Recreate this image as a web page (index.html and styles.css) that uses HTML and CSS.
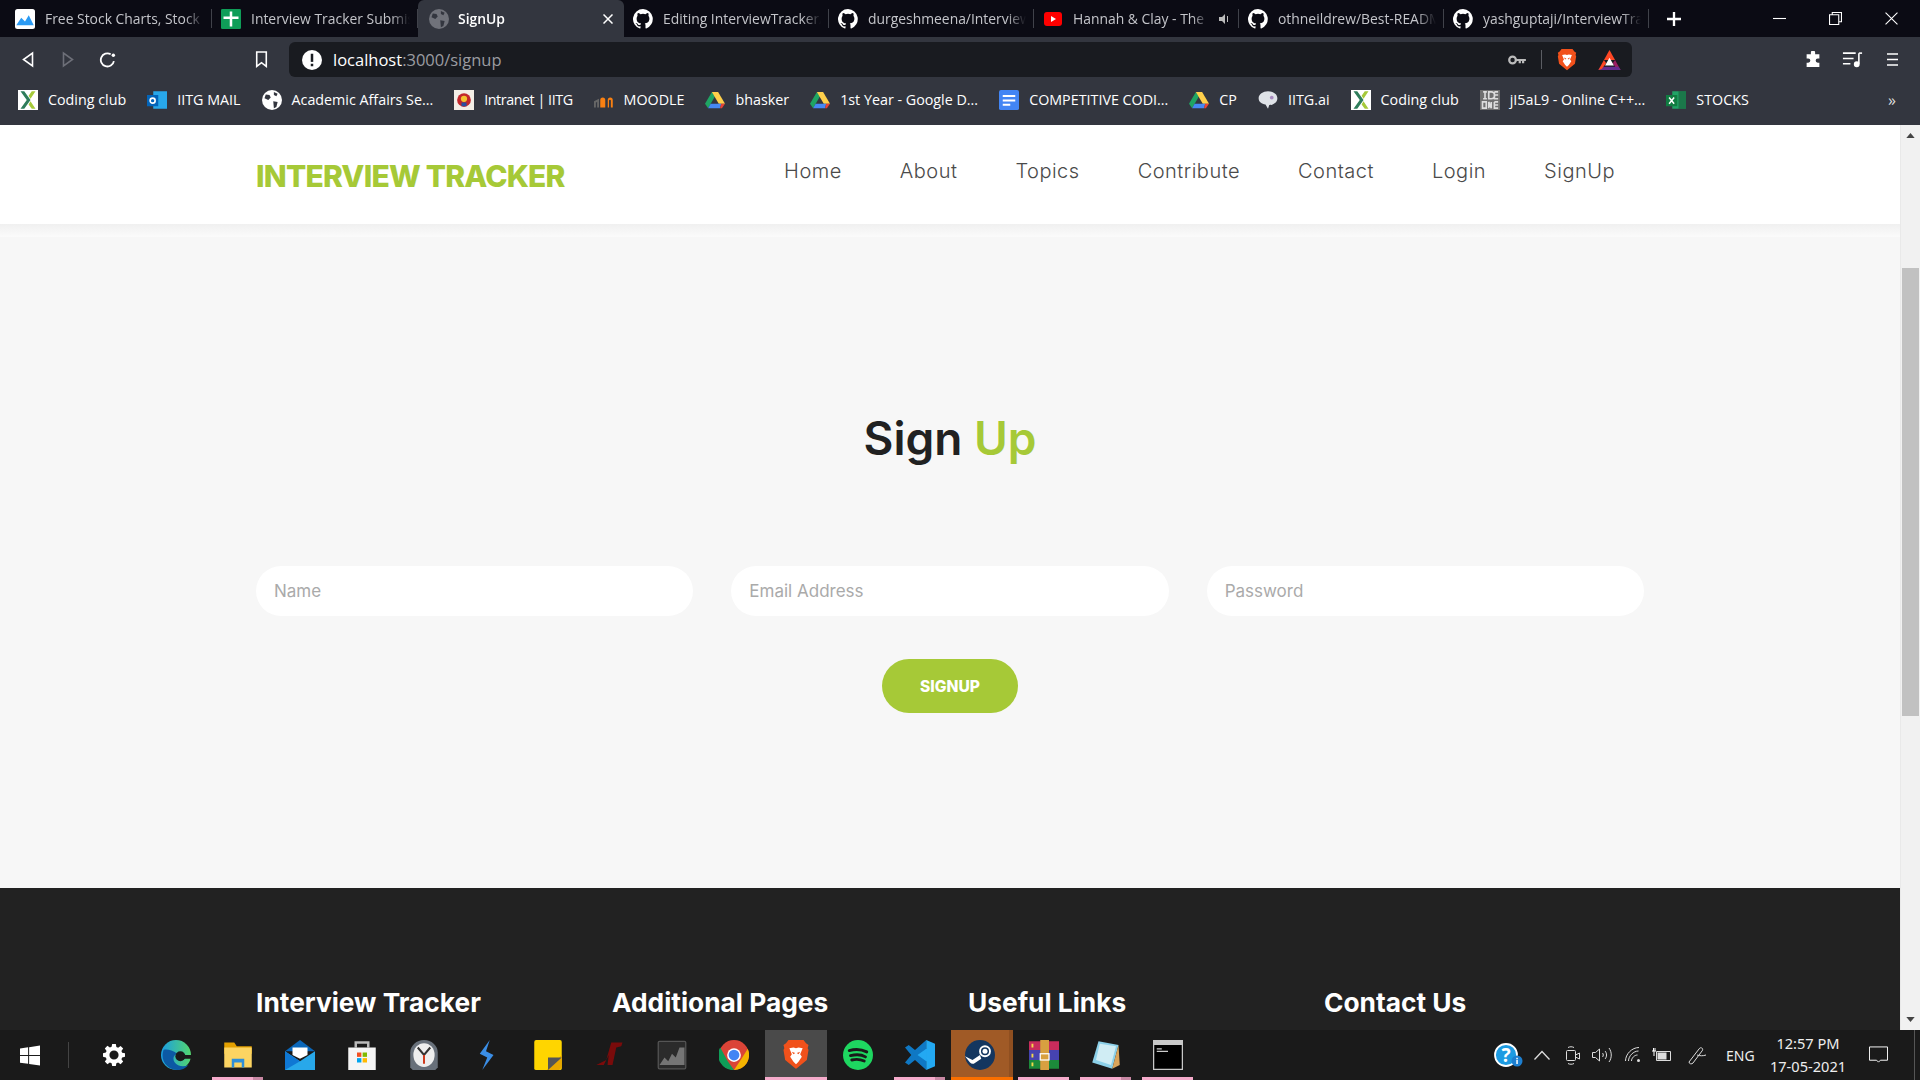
FILE: index.html
```html
<!DOCTYPE html>
<html lang="en">
<head>
<meta charset="utf-8">
<title>SignUp</title>
<link rel="stylesheet" href="styles.css">
</head>
<body>
<svg width="0" height="0" class="defs">
  <defs>
    <symbol id="gh" viewBox="0 0 16 16"><path fill="#fff" d="M8 0a8 8 0 0 0-2.500 15.600c.4.1.5-.2.5-.4v-1.400c-2.200.5-2.700-1-2.700-1-.4-.9-.9-1.200-.9-1.200-.7-.5.100-.5.100-.5.800.1 1.200.8 1.200.8.700 1.200 1.900.9 2.300.7.100-.5.300-.9.500-1.100-1.800-.2-3.600-.9-3.600-4 0-.9.300-1.600.8-2.100-.1-.2-.4-1 .1-2.100 0 0 .7-.2 2.200.8a7.600 7.600 0 0 1 4 0c1.500-1 2.200-.8 2.200-.8.500 1.100.2 1.900.1 2.100.5.600.8 1.300.8 2.100 0 3.100-1.900 3.700-3.700 3.900.3.300.6.800.6 1.500v2.200c0 .2.100.5.600.4A8 8 0 0 0 8 0z"/></symbol>
    <symbol id="globe" viewBox="0 0 16 16"><circle cx="8" cy="8" r="8" fill="currentColor"/><path fill="#33363f" d="M3 3.500l3 .5 1 2-2 2-3-1.500zM9 9l3.500.5-1 4-2 1zM9.500 1.500l3 1.500-1 2-2-1z"/></symbol>
    <symbol id="drive" viewBox="0 0 16 16"><path fill="#1fa463" d="M5.500 1.500L0 11l2.500 3.500L8 5z"/><path fill="#ffd04b" d="M5.500 1.500h5l5.500 9.500h-5z"/><path fill="#4688f4" d="M2.500 14.500h9.500L13 11H4.500z"/><path fill="#e94235" d="M12 14.500h1.500L16 11h-3z"/></symbol>
    <symbol id="cclub" viewBox="0 0 16 16"><rect width="16" height="16" fill="#fff"/><path fill="#2e7d5b" d="M2 1h3l5 7-5 7H2l5-7z"/><path fill="#a5c93a" d="M14 1h-3L8.500 4.500 10 7zM14 15h-3L8.500 11.500 10 9z"/></symbol>
    <symbol id="brave" viewBox="0 0 16 18"><path fill="#f1511b" d="M3.500 0h9l1.500 2 1.500 1-.5 2 .5 1-1 6-6 5-.5.300-.5-.300-6-5-1-6 .5-1-.500-2L2 2z"/><path fill="#fff" d="M4 5l2.500-.5L8 5l1.500-.5L12 5l-1.500 3.500 1 1.500L9.500 13 8 14.500 6.500 13l-2-3 1-1.500z"/><path fill="#f1511b" d="M5.500 7l2 .8-1 .7zM10.500 7l-2 .8 1 .7z"/></symbol>
  </defs>
</svg>

<div class="browser">
  <div class="tabstrip">
    <div class="tab tab-first"><svg class="fav" viewBox="0 0 16 16"><rect width="16" height="16" rx="2" fill="#fff"/><path fill="#2b9bf4" d="M1 13l4-6 3 3 3-5 4 8z"/></svg><span class="tab-title">Free Stock Charts, Stock</span></div>
    <div class="tab tab-second"><svg class="fav" viewBox="0 0 16 16"><rect width="16" height="16" rx="1" fill="#0f9d58"/><path fill="#fff" d="M7 2h2v4h5v2H9v6H7V8H2V6h5z"/></svg><span class="tab-title">Interview Tracker Submis</span></div>
    <div class="tab active"><svg class="fav muted"><use href="#globe"/></svg><span class="tab-title">SignUp</span><svg class="tab-x" viewBox="0 0 10 10" stroke="#fff" stroke-width="1.500"><path d="M.5.500l9 9M9.500.5l-9 9"/></svg></div>
    <div class="tab"><svg class="fav"><use href="#gh"/></svg><span class="tab-title">Editing InterviewTracker/</span></div>
    <div class="tab"><svg class="fav"><use href="#gh"/></svg><span class="tab-title">durgeshmeena/Interview</span></div>
    <div class="tab"><svg class="fav" viewBox="0 0 20 20"><rect x="1" y="3" width="18" height="14" rx="3" fill="#f00"/><path fill="#fff" d="M8 7l5 3-5 3z"/></svg><span class="tab-title">Hannah &amp; Clay - The</span><svg class="tab-sound" viewBox="0 0 12 12"><path fill="#bbb" d="M0 4h3l3-3v10L3 8H0zM8 3v6h1V3z"/></svg></div>
    <div class="tab"><svg class="fav"><use href="#gh"/></svg><span class="tab-title">othneildrew/Best-READM</span></div>
    <div class="tab"><svg class="fav"><use href="#gh"/></svg><span class="tab-title">yashguptaji/InterviewTra</span></div>
    <svg class="newtab" viewBox="0 0 12 12"><path fill="#fff" d="M5 0h2v5h5v2H7v5H5V7H0V5h5z"/></svg>
    <div class="winctl">
      <svg class="winbtn" viewBox="0 0 12 12"><path stroke="#fff" d="M0 6h12"/></svg>
      <svg class="winbtn" viewBox="0 0 12 12" fill="none" stroke="#fff"><path d="M.5 2.500h8.500v9H.5zM3 2.500V.5h8.500v8.500H9"/></svg>
      <svg class="winbtn" viewBox="0 0 12 12"><path stroke="#fff" d="M.5.500l11 11M11.500.5l-11 11"/></svg>
    </div>
  </div>

  <div class="toolbar">
    <svg class="tb-ico back" viewBox="0 0 12 16" fill="none" stroke="#fff" stroke-width="1.600"><path d="M10.500 1.500v13L1.500 8z"/></svg>
    <svg class="tb-ico fwd" viewBox="0 0 12 16" fill="none" stroke="#6d6f78" stroke-width="1.600"><path d="M1.500 1.500v13l9-6.500z"/></svg>
    <svg class="tb-ico reload" viewBox="0 0 16 16" fill="none" stroke="#fff" stroke-width="1.700"><path d="M14 9.500A6.200 6.200 0 1 1 11 3"/><circle cx="13.500" cy="4" r="1.600" fill="#fff" stroke="none"/></svg>
    <svg class="tb-ico bookmark" viewBox="0 0 12 16" fill="none" stroke="#fff" stroke-width="1.500"><path d="M1.500 1h9v13.500L6 11l-4.500 3.500z"/></svg>
    <div class="omnibox">
      <svg class="info" viewBox="0 0 16 16"><circle cx="8" cy="8" r="8" fill="#fff"/><rect x="7" y="3" width="2" height="6.500" fill="#1a1c22"/><rect x="7" y="11" width="2" height="2" fill="#1a1c22"/></svg>
      <span class="url"><span class="url-host">localhost</span>:3000/signup</span>
      <svg class="key" viewBox="0 0 16 9"><circle cx="4" cy="4.500" r="3" fill="none" stroke="#bbb" stroke-width="2"/><path fill="#bbb" d="M6.500 3.500H16v2h-1.500v2h-2v-2h-1v2h-2v-2H6.500z"/></svg>
      <span class="omni-sep"></span>
      <svg class="brave"><use href="#brave"/></svg>
      <svg class="bat" viewBox="0 0 20 18"><path fill="#ff4724" d="M10 0l5 9H5z"/><path fill="#9e1f63" d="M15 9l5 9-3 0-4-6z"/><path fill="#662d91" d="M0 18h20l-2-3H2z"/><path fill="#ff4724" d="M5 9l-5 9 3-1 4-5z"/><path fill="#fff" d="M10 7l4 7H6z"/></svg>
    </div>
    <svg class="tb-ico puzzle" viewBox="0 0 16 16"><path fill="#fff" d="M6 1.500a2 2 0 0 1 4 0V3h4v4h-1.500a2 2 0 0 0 0 4H14v4H2v-4h1.500a2 2 0 0 0 0-4H2V3h4z"/></svg>
    <svg class="tb-ico playlist" viewBox="0 0 18 16" fill="none" stroke="#fff" stroke-width="1.500"><path d="M0 2h12M0 7h10M0 12h7"/><path d="M15 2v10"/><circle cx="13" cy="12.500" r="2" fill="#fff"/><path d="M15 2h3"/></svg>
    <svg class="tb-ico menu" viewBox="0 0 12 16" stroke="#fff" stroke-width="1.500"><path d="M0 2h12M0 8h12M0 14h12"/></svg>
  </div>

  <div class="bookmarks">
    <a class="bm"><svg class="fav"><use href="#cclub"/></svg>Coding club</a>
    <a class="bm"><svg class="fav" viewBox="0 0 16 16"><rect x="5" y="1" width="11" height="14" fill="#28a8ea"/><rect x="0" y="4" width="9" height="9" fill="#0364b8"/><circle cx="4.500" cy="8.500" r="2" fill="none" stroke="#fff" stroke-width="1.300"/></svg>IITG MAIL</a>
    <a class="bm"><svg class="fav"><use href="#globe"/></svg>Academic Affairs Se...</a>
    <a class="bm bm-tight"><svg class="fav" viewBox="0 0 16 16"><rect width="16" height="16" fill="#f3eee6"/><circle cx="8" cy="8" r="5.500" fill="#c3272b"/><circle cx="8" cy="7" r="2.500" fill="#f3c22f"/><rect x="6" y="10" width="4" height="3" fill="#2a4fa0"/></svg>Intranet | IITG</a>
    <a class="bm"><svg class="fav" viewBox="0 0 16 16"><path fill="#f98012" d="M5 14V8a2 2 0 0 1 4 0v6h2V8a2 2 0 0 1 4 0v6h-1.500V8.500a.7.7 0 0 0-1.500 0V14z"/><path fill="#666" d="M0 14V9l4-2v7H2.500V9.500L1.500 10v4z"/></svg>MOODLE</a>
    <a class="bm"><svg class="fav"><use href="#drive"/></svg>bhasker</a>
    <a class="bm"><svg class="fav"><use href="#drive"/></svg>1st Year - Google D...</a>
    <a class="bm"><svg class="fav" viewBox="0 0 16 16"><rect width="16" height="16" rx="1.500" fill="#4285f4"/><path fill="#fff" d="M3 4h10v1.600H3zM3 7.500h10v1.600H3zM3 11h6v1.600H3z"/></svg>COMPETITIVE CODI...</a>
    <a class="bm"><svg class="fav"><use href="#drive"/></svg>CP</a>
    <a class="bm"><svg class="fav" viewBox="0 0 16 16"><path fill="#dfe3e8" d="M8 1c4 0 7.500 2 7.500 5.500S12 12 9 12l-1 3-2-3.500C3 11 .5 9.500.5 6.500S4 1 8 1z"/><circle cx="11" cy="6" r="1.500" fill="#a88cc0"/></svg>IITG.ai</a>
    <a class="bm"><svg class="fav"><use href="#cclub"/></svg>Coding club</a>
    <a class="bm"><svg class="fav" viewBox="0 0 16 16"><rect width="16" height="16" fill="#6f6f6f"/><path stroke="#ddd" stroke-width="1.300" fill="none" d="M2.500 1.500h3M4 1.500V7M2.500 7h3M7 1.500h2a2 2 0 0 1 0 5.500H7zM11.500 1.500h3M11.500 1.500V7h3M11.500 4h3M2 9.500h3v5H2zM7 14.500v-5l2 5v-5M11.500 9.500h3M11.500 9.500v5h3M11.500 12h3"/></svg>jI5aL9 - Online C++...</a>
    <a class="bm"><svg class="fav" viewBox="0 0 16 16"><rect x="5" y="1" width="11" height="14" fill="#21a366"/><rect x="10" y="1" width="6" height="14" fill="#185c37" opacity=".6"/><rect y="4" width="9" height="9" fill="#107c41"/><path stroke="#fff" stroke-width="1.200" d="M2.500 6l4 5M6.500 6l-4 5"/></svg>STOCKS</a>
    <span class="bm-more">»</span>
  </div>
</div>

<div class="viewport">
  <div class="page">
    <header class="site-header">
      <div class="logo">INTERVIEW TRACKER</div>
      <nav class="nav">
        <a>Home</a><a>About</a><a>Topics</a><a>Contribute</a><a>Contact</a><a>Login</a><a>SignUp</a>
      </nav>
    </header>
    <div class="header-shade"></div>
    <main class="signup">
      <h1 class="title">Sign <span class="accent">Up</span></h1>
      <form class="form">
        <div class="fields">
          <input class="field" placeholder="Name">
          <input class="field" placeholder="Email Address">
          <input class="field" placeholder="Password">
        </div>
        <button class="submit" type="button">SIGNUP</button>
      </form>
    </main>
    <footer class="site-footer">
      <h3>Interview Tracker</h3>
      <h3>Additional Pages</h3>
      <h3>Useful Links</h3>
      <h3>Contact Us</h3>
    </footer>
  </div>
  <div class="scrollbar">
    <svg class="sb-arrow" viewBox="0 0 10 6"><path fill="#444" d="M5 0l5 6H0z"/></svg>
    <div class="sb-track"><div class="sb-thumb"></div></div>
    <svg class="sb-arrow" viewBox="0 0 10 6"><path fill="#444" d="M5 6L0 0h10z"/></svg>
  </div>
</div>

<div class="taskbar">
  <div class="task-item start"><svg class="ti win" viewBox="0 0 16 16"><path fill="#fff" d="M0 2.300l6.500-.9v6.200H0zM7.300 1.300L16 0v7.600H7.300zM0 8.400h6.500v6.200L0 13.700zM7.300 8.400H16V16l-8.700-1.300z"/></svg></div>
  <span class="task-sep"></span>
  <div class="task-item"><svg class="ti gear" viewBox="0 0 24 24"><path fill="#fff" fill-rule="evenodd" d="M10 0h4l.6 3.200 1.900.8 2.700-1.900 2.800 2.800-1.900 2.700.8 1.900L24 10v4l-3.100.600-.8 1.900 1.900 2.700-2.800 2.800-2.700-1.900-1.900.8L14 24h-4l-.6-3.100-1.900-.8-2.700 1.900-2.800-2.800 1.900-2.700-.8-1.900L0 14v-4l3.100-.6.8-1.900L2 4.800 4.800 2l2.700 1.900 1.900-.8zM12 7a5 5 0 1 0 0 10 5 5 0 0 0 0-10z"/></svg></div>
  <div class="task-item"><svg class="ti" viewBox="0 0 24 24"><defs><linearGradient id="e1" x1="0" y1="0" x2="1" y2="0"><stop offset="0" stop-color="#1b9de2"/><stop offset="1" stop-color="#53d66e"/></linearGradient></defs><circle cx="12" cy="12" r="12" fill="url(#e1)"/><path fill="#0c59a4" d="M2 8c-3 8 3 16 11 16 4 0 7-1.500 9-4-4 2-9 1-11-2-2-3-1-6 2-7-4-3-9-4-11-3z"/><circle cx="15.500" cy="13" r="4" fill="#1a1a1a"/><path fill="#1a1a1a" d="M13 12h11v3H16z"/></svg></div>
  <div class="task-item run stacked"><svg class="ti" viewBox="0 0 24 24"><path fill="#e3a000" d="M1 2h8l2 3h12v6H1z"/><path fill="#fcd462" d="M1 6h22v16H1z"/><path fill="#2f8fd8" d="M7 15h10v7h-2v-4H9v4H7z"/></svg></div>
  <div class="task-item"><svg class="ti" viewBox="0 0 24 24"><path fill="#0a66b8" d="M12 0l12 9H0z"/><path fill="#fff" d="M6 6h12v6l-6 3-6-3z"/><path fill="#28a8ea" d="M0 9l12 8 12-8v15H0z"/><path fill="#0f78d4" d="M0 9l12 8-12 7z"/></svg></div>
  <div class="task-item"><svg class="ti" viewBox="0 0 24 24"><path fill="none" stroke="#bbb" stroke-width="2" d="M7 6V2h10v4"/><path fill="#f5f5f5" d="M1 6h22v18H1z"/><path fill="#f25022" d="M8 10h3.500v3.500H8z"/><path fill="#7fba00" d="M12.500 10H16v3.500h-3.500z"/><path fill="#00a4ef" d="M8 14.500h3.500V18H8z"/><path fill="#ffb900" d="M12.500 14.500H16V18h-3.500z"/></svg></div>
  <div class="task-item"><svg class="ti" viewBox="0 0 24 24"><path fill="#68707a" d="M1 22V10a11 10 0 0 1 22 0v12l-2 2H3z"/><ellipse cx="12" cy="12" rx="8.500" ry="9.500" fill="#eee"/><path stroke="#333" stroke-width="1.600" fill="none" d="M7 6l5 6 5-6"/><path stroke="#d13a1d" stroke-width="1.600" d="M12 12v7"/></svg></div>
  <div class="task-item"><svg class="ti" viewBox="0 0 24 24"><path fill="#3b8ee6" d="M15 0L7 11l6 3-4 10 9-12-6-3z"/></svg></div>
  <div class="task-item"><svg class="ti" viewBox="0 0 24 24"><rect width="22" height="24" x="1" rx="1.500" fill="#ffd500"/><path fill="#e8a800" d="M23 12v10l-2 2H11z"/><path fill="#555" d="M12 24V14h11z"/></svg></div>
  <div class="task-item"><svg class="ti" viewBox="0 0 24 24"><path fill="#7a0b0b" d="M1 20l8-4 4-14h9l-1 3-4 1-3 14H10l1-8-4 8z"/></svg></div>
  <div class="task-item"><svg class="ti" viewBox="0 0 24 24"><rect x="1" y="1" width="22" height="22" rx="1" fill="#2b2b2b" stroke="#555"/><path fill="#888" d="M2 20l4-6 3 3 3-6 3 3 3-8h4v14z" opacity=".8"/></svg></div>
  <div class="task-item"><svg class="ti" viewBox="0 0 24 24"><circle cx="12" cy="12" r="12" fill="#db4437"/><path fill="#0f9d58" d="M12 24A12 12 0 0 1 1 6l6 11 5 7z"/><path fill="#f4b400" d="M23 7a12 12 0 0 1-11 17l6-9z"/><circle cx="12" cy="12" r="5.500" fill="#fff"/><circle cx="12" cy="12" r="4.300" fill="#4285f4"/></svg></div>
  <div class="task-item active"><svg class="ti"><use href="#brave"/></svg></div>
  <div class="task-item"><svg class="ti" viewBox="0 0 24 24"><circle cx="12" cy="12" r="12" fill="#1ed760"/><path stroke="#1a1a1a" fill="none" stroke-linecap="round" stroke-width="2.300" d="M5 8.500c5-1.500 10-1 14 1M6 12.500c4-1 9-.8 12 1M7 16c3-.8 7-.6 10 .8"/></svg></div>
  <div class="task-item run stacked"><svg class="ti" viewBox="0 0 24 24"><path fill="#0f78c4" d="M17 0v24l-9-8-5 4-3-2 5-6-5-6 3-2 5 4z"/><path fill="#23a9f2" d="M17 0l7 3v18l-7 3zM17 7l-7 5 7 5z"/></svg></div>
  <div class="task-item steam"><svg class="ti" viewBox="0 0 24 24"><circle cx="12" cy="12" r="12" fill="#14365f"/><circle cx="16" cy="9" r="4" fill="none" stroke="#fff" stroke-width="1.500"/><circle cx="16" cy="9" r="2" fill="#fff"/><path fill="#fff" d="M0 13l6 3 6-4 1 3-6 4a3 3 0 0 1-3-1z"/></svg></div>
  <div class="task-item run"><svg class="ti" viewBox="0 0 24 24"><rect y="1" width="24" height="7" fill="#c72c5c"/><rect y="8" width="24" height="8" fill="#4643b0"/><rect y="16" width="24" height="7" fill="#1c8a3a"/><rect x="9" width="7" height="24" fill="#d8a040"/><rect x="9" y="11" width="7" height="5" fill="none" stroke="#fff"/><path fill="#f3d84a" d="M2 3h1.500v3H2zM2 11h1.500v3H2zM2 18h1.500v3H2z"/></svg></div>
  <div class="task-item run stacked"><svg class="ti" viewBox="0 0 24 24"><path fill="#8cd0e8" d="M6 1l16 3-5 19L1 18z"/><path fill="#d0edf4" d="M7 3l13 2-4 15L4 16z"/><path fill="#d9a45a" d="M22 4l1 16-6 3z"/></svg></div>
  <div class="task-item run"><svg class="ti" viewBox="0 0 24 24"><rect width="24" height="24" fill="#c8c8c8"/><rect x="1" y="4" width="22" height="19" fill="#000"/><path stroke="#ccc" d="M3 7h4M3 9h9"/></svg></div>

  <div class="tray">
    <div class="help"><svg class="help-ico" viewBox="0 0 29 24"><circle cx="12" cy="12" r="11" fill="#1d9be2" stroke="#fff" stroke-width="1.800"/><circle cx="23" cy="18" r="5.500" fill="#1d7fd0"/><rect x="22.300" y="17" width="1.500" height="4" fill="#fff"/><rect x="22.300" y="14.800" width="1.500" height="1.500" fill="#fff"/></svg><span class="help-q">?</span></div>
    <svg class="tr tr-up" viewBox="0 0 16 10" fill="none" stroke="#ddd" stroke-width="1.300"><path d="M.5 9.500l7.500-8 7.500 8"/></svg>
    <svg class="tr tr-cam" viewBox="0 0 14 19" fill="none" stroke="#ddd"><rect x=".5" y="4.500" width="9" height="10" rx="1"/><path d="M9.500 9l4-2v6l-4-2M2 1.500c2-1 4-1 6 0M2 17.500c2 1 4 1 6 0"/></svg>
    <svg class="tr tr-vol" viewBox="0 0 20 16" fill="none" stroke="#ddd"><path d="M.5 5.500h3L7.500 2v12l-4-3.500h-3zM10.500 6c1 1 1 3 0 4M13 4c2 2 2 6 0 8M17 1c3 4 3 10 0 14" /></svg>
    <svg class="tr tr-wifi" viewBox="0 0 16 16" fill="none" stroke="#ddd"><path d="M.5 14C.5 7 7 .5 14 .5M3.500 14c0-5 5-10 10-10M6.500 14c0-3 3-6 6-6"/><circle cx="13.500" cy="13.500" r="1.500" fill="#ddd" stroke="none"/></svg>
    <svg class="tr tr-batt" viewBox="0 0 20 14"><path fill="none" stroke="#ddd" d="M4.500 3.500h14v9h-14z"/><rect x="5.500" y="4.500" width="9" height="7" fill="#ddd"/><path stroke="#fff" d="M0 3h4M1.500 0v3M3 0v3M2 3v5"/></svg>
    <svg class="tr tr-pen" viewBox="0 0 20 20" fill="none" stroke="#ddd"><path d="M2 17L12 4c2-3 5 0 3 2L6 18c-1 1.500-4 1-4-1M10 10c3 1 6 1 9 0"/></svg>
    <span class="lang">ENG</span>
    <div class="clock"><span>12:57 PM</span><span>17-05-2021</span></div>
    <svg class="notif" viewBox="0 0 20 18" fill="none" stroke="#fff"><path d="M.5.500h19v14H12l-2 2-2-2H.5z"/></svg>
    <span class="show-desktop"></span>
  </div>
</div>
</body>
</html>
```
FILE: styles.css
```css
* { box-sizing: border-box; }
html, body { margin: 0; height: 100%; overflow: hidden; }
body { display: flex; flex-direction: column; height: 1080px; background: #fff; font-family: "Open Sans", "Liberation Sans", sans-serif; }
.defs { position: absolute; }
.browser { flex: none; color: #fff; }
.fav { width: 20px; height: 20px; flex: none; }

.tabstrip { display: flex; align-items: center; height: 37px; background: #0b0b14; }
.tab { width: 205px; height: 37px; flex: none; display: flex; align-items: center; gap: 10px; padding: 0 8px 0 9px; font-size: 13.9px; color: #c4c5ca; position: relative; }
.tab::after { content: ""; position: absolute; right: 0; top: 9px; height: 19px; width: 1px; background: #40424a; }
.tab-first { width: 212px; padding-left: 15px; }
.tab-second { width: 206px; padding-left: 9px; }
.tab-title { overflow: hidden; white-space: nowrap; flex: 1; -webkit-mask-image: linear-gradient(to right, #000 88%, transparent); mask-image: linear-gradient(to right, #000 88%, transparent); }
.tab.active { width: 206px; background: #33363f; color: #fff; font-weight: 600; border-radius: 6px 6px 0 0; padding: 0 11px; gap: 9px; }
.tab.active::after { display: none; }
.muted { color: #70727a; }
.tab-x { width: 10px; height: 10px; flex: none; }
.tab-sound { width: 12px; height: 12px; flex: none; }
.newtab { width: 14px; height: 14px; margin-left: 18px; flex: none; }
.winctl { margin-left: auto; display: flex; gap: 43px; padding-right: 22px; }
.winbtn { width: 13px; height: 13px; }

.toolbar { height: 42px; background: #33363f; padding: 3px 0 0 22px; display: flex; align-items: center; }
.tb-ico { flex: none; height: 17px; }
.back { width: 12px; }
.fwd { width: 12px; margin-left: 28px; }
.reload { width: 17px; margin-left: 25px; }
.bookmark { width: 13px; margin-left: 139px; }
.omnibox { width: 1343px; height: 35px; margin-left: 21px; background: #191b20; border-radius: 6px; display: flex; align-items: center; padding: 0 11px 0 13px; flex: none; }
.info { width: 20px; height: 20px; flex: none; }
.url { margin-left: 11px; font-size: 16.5px; color: #9b9ca1; flex: 1; }
.url-host { color: #fff; }
.key { width: 18px; height: 10px; flex: none; }
.omni-sep { width: 1px; height: 19px; background: #5b5d63; margin: 0 15px; flex: none; }
.brave { width: 20px; height: 22px; flex: none; }
.bat { width: 23px; height: 20px; margin-left: 21px; flex: none; }
.puzzle { width: 18px; margin-left: 172px; }
.playlist { width: 21px; margin-left: 20px; }
.menu { width: 11px; margin-left: 24px; }

.bookmarks { height: 46px; background: #33363f; display: flex; align-items: center; padding: 0 0 5px 18px; gap: 21px; font-size: 14.3px; position: relative; }
.bm { display: flex; align-items: center; gap: 10px; white-space: nowrap; color: #fff; }
.bm-tight { letter-spacing: -.45px; }
.bm-more { position: absolute; right: 24px; font-size: 16px; color: #ddd; }

.viewport { height: 905px; flex: none; display: flex; overflow: hidden; }
.page { flex: 1; display: flex; flex-direction: column; min-width: 0; }
.scrollbar { width: 20px; flex: none; background: #f1f1f1; border-left: 1px solid #e9e9e9; display: flex; flex-direction: column; align-items: center; padding: 8px 0; }
.sb-arrow { width: 9px; height: 5px; flex: none; }
.sb-track { flex: 1; width: 100%; padding-top: 130px; }
.sb-thumb { width: 17px; margin: 0 auto; height: 448px; background: #c1c1c1; }

.site-header { height: 99px; flex: none; background: #fff; display: flex; padding: 0 285px 0 256px; }
.header-shade { height: 13px; flex: none; background: linear-gradient(#f0f0f0, #fbfbfb); }
.logo { font-family: Inter, sans-serif; font-weight: 800; font-size: 30px; letter-spacing: -.8px; color: #a6c937; padding-top: 31px; line-height: 40px; }
.nav { margin-left: auto; display: flex; gap: 58px; padding-top: 32px; font-family: Inter, sans-serif; font-weight: 300; font-size: 20px; line-height: 28px; letter-spacing: .5px; color: #4a4a4a; }

.signup { flex: none; height: 651px; background: #f7f7f7; padding: 0 256px; display: flex; flex-direction: column; }
.title { margin: 176px 0 0; text-align: center; font-family: Inter, sans-serif; font-weight: 600; font-size: 46px; line-height: 50px; color: #212121; }
.accent { color: #a6c937; }
.form { display: flex; flex-direction: column; align-items: center; margin-top: 103px; }
.fields { display: flex; gap: 38px; width: 100%; }
.field { flex: 1; min-width: 0; height: 50px; border: 0; border-radius: 25px; background: #fff; padding: 0 18px; font-family: Inter, sans-serif; font-size: 17px; color: #333; outline: 0; }
.field::placeholder { color: #aaa; }
.submit { margin-top: 43px; width: 136px; height: 54px; border: 0; border-radius: 27px; background: #a6c937; color: #fff; font-family: Inter, sans-serif; font-weight: 800; font-size: 15.6px; }

.site-footer { flex: 1; background: #222; display: grid; grid-template-columns: repeat(4, 356px); padding: 98px 0 0 256px; }
.site-footer h3 { margin: 0; font-family: Inter, sans-serif; font-weight: 700; font-size: 26.3px; line-height: 34px; color: #fff; white-space: nowrap; }

.taskbar { height: 50px; flex: none; background: #1a1a1a; display: flex; align-items: stretch; position: relative; }
.task-item { width: 62px; height: 50px; flex: none; display: flex; align-items: center; justify-content: center; position: relative; }
.start { width: 60px; }
.task-sep { width: 1px; height: 26px; margin: 12px 0 0 8px; background: #444; flex: none; }
.task-sep + .task-item { margin-left: 14px; }
.ti { width: 30px; height: 30px; }
.ti.win { width: 20px; height: 21px; }
.ti.gear { width: 22px; height: 22px; }
.run::after { content: ""; position: absolute; left: 5px; right: 6px; bottom: 0; height: 3px; background: #f5abcb; }
.stacked::before { content: ""; position: absolute; right: 6px; bottom: 0; width: 10px; height: 3px; background: #c888a4; z-index: 1; }
.active { background: #4a4a4a; }
.active::after { content: ""; position: absolute; left: 0; right: 0; bottom: 0; height: 3px; background: #f5abcb; }
.steam { background: #a05a26; border-right: 4px solid #8f4f20; }
.steam::after { content: ""; position: absolute; left: 0; right: -4px; bottom: 0; height: 3px; background: #f96f00; }
.tray { margin-left: auto; display: flex; align-items: center; color: #eee; font-family: "Noto Sans", sans-serif; padding-right: 32px; position: relative; }
.help { position: relative; width: 29px; height: 24px; margin-right: 11px; }
.help-ico { display: block; width: 29px; height: 24px; }
.help-q { position: absolute; left: 5px; top: -2px; width: 14px; text-align: center; font-size: 19px; line-height: 28px; font-weight: 700; color: #fff; }
.tr { flex: none; }
.tr-up { width: 16px; height: 10px; margin-right: 16px; }
.tr-cam { width: 14px; height: 19px; margin-right: 12px; }
.tr-vol { width: 20px; height: 16px; margin-right: 13px; }
.tr-wifi { width: 16px; height: 16px; margin-right: 11px; }
.tr-batt { width: 20px; height: 14px; margin-right: 15px; }
.tr-pen { width: 20px; height: 20px; margin-right: 19px; }
.lang { font-size: 14px; margin-right: 18px; width: 27px; white-space: nowrap; }
.clock { display: flex; flex-direction: column; align-items: center; width: 74px; font-size: 14.6px; line-height: 23px; margin-right: 24px; white-space: nowrap; }
.notif { width: 19px; height: 18px; flex: none; }
.show-desktop { position: absolute; right: 5px; top: 0; width: 1px; height: 50px; background: #555; }
```
